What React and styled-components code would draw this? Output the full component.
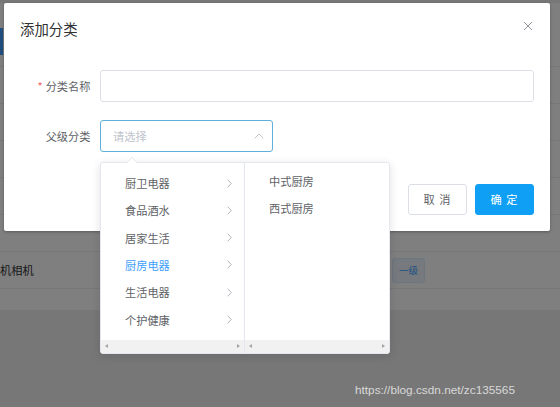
import React from 'react'
import styled, { createGlobalStyle } from 'styled-components'

const GlobalStyle = createGlobalStyle`
  html, body { margin: 0; padding: 0; }
  body {
    font-family: "Noto Sans CJK SC", "Noto Sans", sans-serif;
    -webkit-font-smoothing: antialiased;
  }
  * { box-sizing: border-box; }
`

const Page = styled.div`
  position: relative;
  width: 560px;
  height: 407px;
  overflow: hidden;
  background: #eeeeee;
  padding-top: 3px;
`

const Card = styled.div`
  height: 307px;
  background: #fff;
  display: flex;
  flex-direction: column;
`

const Toolbar = styled.div`
  height: 64px;
  padding-top: 25px;
  border-bottom: 1px solid #ebeef5;
`

const BlueBtn = styled.div`
  width: 3px;
  height: 27px;
  background: #409eff;
`

const Row = styled.div`
  height: 37px;
  display: flex;
  align-items: center;
  border-bottom: 1px solid #ebeef5;
  font-size: 11.2px;
  color: #303133;
`

const Cell = styled.div`
  width: ${p => p.w || 'auto'};
  line-height: 16px;
`

const Tag = styled.span`
  display: inline-flex;
  align-items: center;
  height: 25px;
  padding: 0 6px;
  font-size: 9.6px;
  color: #409eff;
  background: #ecf5ff;
  border: 1px solid #d9ecff;
  border-radius: 3px;
`

const Mask = styled.div`
  position: absolute;
  inset: 0;
  background: rgba(0, 0, 0, 0.5);
`

const Dialog = styled.div`
  position: absolute;
  left: 4px;
  top: 3px;
  width: 546px;
  background: #fff;
  border-radius: 2px;
  box-shadow: 0 1px 3px rgba(0, 0, 0, 0.3);
`

const DialogHeader = styled.div`
  position: relative;
  padding: 16px 16px 8px;
`

const Title = styled.span`
  display: block;
  font-size: 14.4px;
  line-height: 19px;
  color: #303133;
`

const CloseBtn = styled.div`
  position: absolute;
  top: 16px;
  right: 16px;
  width: 13px;
  height: 13px;
  display: flex;
  align-items: center;
  justify-content: center;
`

const DialogBody = styled.div`
  padding: 24px 16px;
`

const FormItem = styled.div`
  display: flex;
  margin-bottom: ${p => (p.last ? '0' : '17.6px')};
`

const Label = styled.label`
  width: 80px;
  flex-shrink: 0;
  padding-right: 9.6px;
  text-align: right;
  font-size: 11.2px;
  line-height: 32px;
  color: #606266;
`

const Star = styled.span`
  color: #f56c6c;
  margin-right: 3px;
`

const Input = styled.div`
  flex: 1;
  height: 32px;
  border: 1px solid #dcdfe6;
  border-radius: 3px;
`

const SelectWrap = styled.div`
  position: relative;
  width: 173px;
`

const SelectBox = styled.div`
  height: 32px;
  border: 1px solid #5fb0de;
  border-radius: 3px;
  padding: 0 8px 0 12px;
  display: flex;
  align-items: center;
  justify-content: space-between;
  font-size: 11.2px;
  color: #c0c4cc;
`

const Dropdown = styled.div`
  position: absolute;
  top: calc(100% + 10px);
  left: 0;
  display: flex;
  background: #fff;
  border: 1px solid #e4e7ed;
  border-radius: 3px;
  box-shadow: 0 2px 10px rgba(0, 0, 0, 0.12);

  &::before, &::after {
    content: '';
    position: absolute;
    left: 25px;
    border: 6px solid transparent;
    border-top-width: 0;
  }
  &::before {
    top: -6px;
    border-bottom-color: #e4e7ed;
  }
  &::after {
    top: -5px;
    border-bottom-color: #fff;
  }
`

const Menu = styled.div`
  width: 144px;
  height: 190px;
  display: flex;
  flex-direction: column;
  border-right: ${p => (p.divider ? '1px solid #e4e7ed' : 'none')};
`

const List = styled.ul`
  flex: 1;
  margin: 0;
  padding: ${p => p.top}px 0 0;
  list-style: none;
`

const Item = styled.li`
  height: 27.3px;
  padding: 0 12px 0 24px;
  display: flex;
  align-items: center;
  justify-content: space-between;
  font-size: 11.2px;
  color: ${p => (p.active ? '#409eff' : '#606266')};
`

const ScrollBar = styled.div`
  height: 13px;
  background: #f1f1f1;
  display: flex;
  align-items: center;
  justify-content: space-between;
  padding: 0 4px;
`

const Arrow = styled.span`
  width: 0;
  height: 0;
  border-top: 2.5px solid transparent;
  border-bottom: 2.5px solid transparent;
  ${p => (p.dir === 'left'
    ? 'border-right: 3px solid #a3a3a3;'
    : 'border-left: 3px solid #a3a3a3;')}
`

const Footer = styled.div`
  padding: 8px 16px 16px;
  display: flex;
  justify-content: flex-end;
  gap: 8px;
`

const Button = styled.button`
  width: 59px;
  height: 31px;
  padding: 0;
  font-family: inherit;
  font-size: 11.2px;
  letter-spacing: 1px;
  border-radius: 3px;
  border: 1px solid ${p => (p.primary ? '#0f9ff5' : '#dcdfe6')};
  background: ${p => (p.primary ? '#0f9ff5' : '#fff')};
  color: ${p => (p.primary ? '#fff' : '#606266')};
`

const Watermark = styled.div`
  position: absolute;
  right: 45px;
  bottom: 10px;
  font-family: "Liberation Sans", Arial, sans-serif;
  font-size: 11.8px;
  line-height: 14px;
  color: rgba(255, 255, 255, 0.72);
`

const Chevron = () => (
  <svg width="5" height="9" viewBox="0 0 5 9">
    <polyline points="0.7,0.7 4.2,4.5 0.7,8.3" fill="none" stroke="#a8abb2" strokeWidth="0.9" />
  </svg>
)

const first = ['厨卫电器', '食品酒水', '居家生活', '厨房电器', '生活电器', '个护健康']
const second = ['中式厨房', '西式厨房']

export default function App() {
  return (
    <Page>
      <GlobalStyle />
      <Card>
        <Toolbar>
          <BlueBtn />
        </Toolbar>
        <Row />
        <Row />
        <Row />
        <Row />
        <Row />
        <Row>
          <Cell w="392px">机相机</Cell>
          <Tag>一级</Tag>
        </Row>
      </Card>
      <Mask />
      <Watermark>https://blog.csdn.net/zc135565</Watermark>
      <Dialog>
        <DialogHeader>
          <Title>添加分类</Title>
          <CloseBtn>
            <svg width="10" height="10" viewBox="0 0 10 10">
              <path d="M1 1 L9 9 M9 1 L1 9" stroke="#909399" strokeWidth="1" />
            </svg>
          </CloseBtn>
        </DialogHeader>
        <DialogBody>
          <FormItem>
            <Label><Star>*</Star>分类名称</Label>
            <Input />
          </FormItem>
          <FormItem last>
            <Label>父级分类</Label>
            <SelectWrap>
              <SelectBox>
                <span>请选择</span>
                <svg width="10" height="6" viewBox="0 0 10 6">
                  <polyline points="0.7,5.3 5,1 9.3,5.3" fill="none" stroke="#c0c4cc" strokeWidth="1" />
                </svg>
              </SelectBox>
              <Dropdown>
                <Menu divider>
                  <List top={6.8}>
                    {first.map(t => (
                      <Item key={t} active={t === '厨房电器'}>
                        <span>{t}</span>
                        <Chevron />
                      </Item>
                    ))}
                  </List>
                  <ScrollBar>
                    <Arrow dir="left" />
                    <Arrow dir="right" />
                  </ScrollBar>
                </Menu>
                <Menu>
                  <List top={4.5}>
                    {second.map(t => (
                      <Item key={t}>
                        <span>{t}</span>
                      </Item>
                    ))}
                  </List>
                  <ScrollBar>
                    <Arrow dir="left" />
                    <Arrow dir="right" />
                  </ScrollBar>
                </Menu>
              </Dropdown>
            </SelectWrap>
          </FormItem>
        </DialogBody>
        <Footer>
          <Button>取 消</Button>
          <Button primary>确 定</Button>
        </Footer>
      </Dialog>
    </Page>
  )
}
